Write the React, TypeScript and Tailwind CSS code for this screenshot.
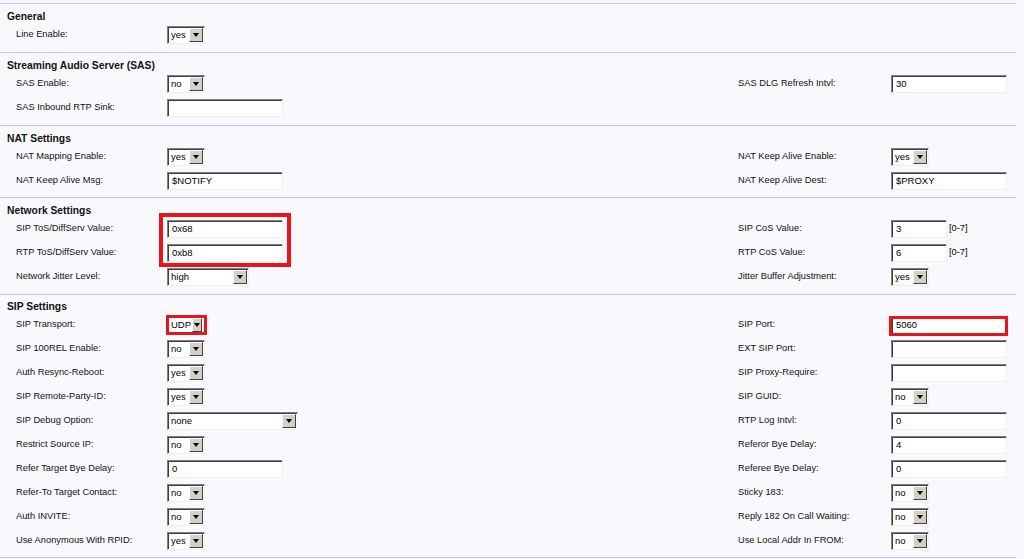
type Ctl =
  | { kind: "select"; value: string; w: string }
  | { kind: "input"; value: string; w?: string; suffix?: string };

interface Row {
  l: string;
  lc: Ctl;
  r?: string;
  rc?: Ctl;
}

interface Section {
  title: string;
  head: string;
  pb: string;
  rows: Row[];
}

const sel = (value: string, w = "w-[38px]"): Ctl => ({ kind: "select", value, w });
const inp = (value: string, w = "w-[116px]", suffix?: string): Ctl => ({ kind: "input", value, w, suffix });

const sections: Section[] = [
  { title: "General", head: "h-[19px] pt-[6px]", pb: "pb-[5px]", rows: [{ l: "Line Enable:", lc: sel("yes") }] },
  {
    title: "Streaming Audio Server (SAS)",
    head: "h-[19px] pt-[6px]",
    pb: "pb-[5px]",
    rows: [
      { l: "SAS Enable:", lc: sel("no"), r: "SAS DLG Refresh Intvl:", rc: inp("30") },
      { l: "SAS Inbound RTP Sink:", lc: inp("") },
    ],
  },
  {
    title: "NAT Settings",
    head: "h-[19px] pt-[6px]",
    pb: "pb-[4px]",
    rows: [
      { l: "NAT Mapping Enable:", lc: sel("yes"), r: "NAT Keep Alive Enable:", rc: sel("yes") },
      { l: "NAT Keep Alive Msg:", lc: inp("$NOTIFY"), r: "NAT Keep Alive Dest:", rc: inp("$PROXY") },
    ],
  },
  {
    title: "Network Settings",
    head: "h-[19px] pt-[6px]",
    pb: "pb-[5px]",
    rows: [
      { l: "SIP ToS/DiffServ Value:", lc: inp("0x68"), r: "SIP CoS Value:", rc: inp("3", "w-[56px]", "[0-7]") },
      { l: "RTP ToS/DiffServ Value:", lc: inp("0xb8"), r: "RTP CoS Value:", rc: inp("6", "w-[56px]", "[0-7]") },
      { l: "Network Jitter Level:", lc: sel("high", "w-[82px]"), r: "Jitter Buffer Adjustment:", rc: sel("yes") },
    ],
  },
  {
    title: "SIP Settings",
    head: "h-[18px] pt-[5px]",
    pb: "pb-[4px]",
    rows: [
      { l: "SIP Transport:", lc: sel("UDP", "w-[37px]"), r: "SIP Port:", rc: inp("5060") },
      { l: "SIP 100REL Enable:", lc: sel("no"), r: "EXT SIP Port:", rc: inp("") },
      { l: "Auth Resync-Reboot:", lc: sel("yes"), r: "SIP Proxy-Require:", rc: inp("") },
      { l: "SIP Remote-Party-ID:", lc: sel("yes"), r: "SIP GUID:", rc: sel("no") },
      { l: "SIP Debug Option:", lc: sel("none", "w-[131px]"), r: "RTP Log Intvl:", rc: inp("0") },
      { l: "Restrict Source IP:", lc: sel("no"), r: "Referor Bye Delay:", rc: inp("4") },
      { l: "Refer Target Bye Delay:", lc: inp("0"), r: "Referee Bye Delay:", rc: inp("0") },
      { l: "Refer-To Target Contact:", lc: sel("no"), r: "Sticky 183:", rc: sel("no") },
      { l: "Auth INVITE:", lc: sel("no"), r: "Reply 182 On Call Waiting:", rc: sel("no") },
      { l: "Use Anonymous With RPID:", lc: sel("yes"), r: "Use Local Addr In FROM:", rc: sel("no") },
    ],
  },
];

const sunken =
  "border border-t-[#808080] border-l-[#808080] border-r-[#f0f0f0] border-b-[#f0f0f0] shadow-[inset_1px_1px_0_#404040]";

function Control({ c }: { c: Ctl }) {
  if (c.kind === "select") {
    return (
      <div className={`flex h-[18px] items-stretch bg-white ${sunken} ${c.w}`}>
        <span className="flex-1 pl-[3px] text-[9.5px] leading-[16px] text-black">{c.value}</span>
        <span className="m-[1px] flex w-[14px] items-center justify-center border border-t-[#ffffff] border-l-[#ffffff] border-r-[#404040] border-b-[#404040] bg-[#d4d0c8]">
          <span className="h-0 w-0 border-l-[3.5px] border-r-[3.5px] border-t-[4px] border-l-transparent border-r-transparent border-t-black" />
        </span>
      </div>
    );
  }
  return (
    <div className="flex items-center gap-[2px]">
      <div className={`h-[18px] bg-white pl-[4px] text-[9.5px] leading-[16px] text-black ${sunken} ${c.w}`}>{c.value}</div>
      {c.suffix && <span className="text-[9.3px] text-black">{c.suffix}</span>}
    </div>
  );
}

function SectionBlock({ s }: { s: Section }) {
  return (
    <div className={s.pb}>
      <div className={`${s.head} pl-[7px] text-[10.3px] font-bold leading-[13px] text-[#111]`}>{s.title}</div>
      {s.rows.map((r) => (
        <div key={r.l} className="grid h-[24px] grid-cols-[151px_571px_153px_1fr] items-center pl-[16px] text-[9.3px] text-[#111]">
          <span>{r.l}</span>
          <div>
            <Control c={r.lc} />
          </div>
          <span>{r.r}</span>
          <div>{r.rc && <Control c={r.rc} />}</div>
        </div>
      ))}
    </div>
  );
}

export default function App() {
  return (
    <div className="relative h-[559px] w-[1024px] overflow-hidden bg-[#f9f9fd] pt-[3px] font-['Liberation_Sans',Arial,sans-serif]">
      {sections.map((s) => (
        <div key={s.title}>
          <div className="mr-[8px] h-px bg-[#c4c4ec]" />
          <SectionBlock s={s} />
        </div>
      ))}
      <div className="mr-[8px] h-px bg-[#c4c4ec]" />

      {/* red highlight marks drawn over the screenshot */}
      <div className="absolute left-[159px] top-[213px] h-[54px] w-[132px] border-4 border-[#e8141e]" />
      <div className="absolute left-[166px] top-[315px] h-[20px] w-[41px] border-[3px] border-[#e8141e]" />
      <div className="absolute left-[889px] top-[316px] h-[20px] w-[119px] border-[3px] border-[#e8141e]" />
    </div>
  );
}
